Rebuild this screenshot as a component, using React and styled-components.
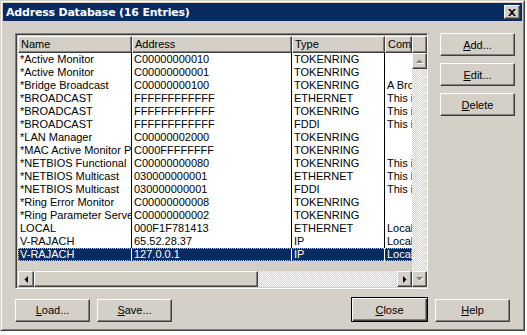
import styled, { createGlobalStyle, css } from "styled-components";

const GlobalStyle = createGlobalStyle`
    html, body {
        margin: 0;
        padding: 0;
        background: #ffffff;
    }
    body {
        font-family: "Liberation Sans", Arial, sans-serif;
        font-size: 11px;
        color: #000;
    }
`

const face = '#d4d0c8'

const raised = css`
    border: 1px solid;
    border-color: #fff #404040 #404040 #fff;
    box-shadow: inset -1px -1px 0 #808080, inset 1px 1px 0 ${face};
`

const Window = styled.div`
    width: 525px;
    height: 331px;
    box-sizing: border-box;
    background: ${face};
    border: 1px solid;
    border-color: ${face} #404040 #404040 ${face};
    box-shadow: inset 1px 1px 0 #fff, inset -1px -1px 0 #808080;
    padding: 2px;
    display: flex;
    flex-direction: column;
`

const TitleBar = styled.div`
    height: 18px;
    background: #0a2a62;
    color: #fff;
    display: flex;
    align-items: center;
    justify-content: space-between;
    padding: 0 2px 0 3px;
    font-family: "DejaVu Sans", Verdana, sans-serif;
    font-weight: bold;
    font-size: 11px;
    letter-spacing: -0.2px;
`

const CloseBox = styled.div`
    width: 14px;
    height: 12px;
    background: ${face};
    ${raised};
    display: flex;
    align-items: center;
    justify-content: center;
`

const Body = styled.div`
    padding: 12px 12px 0 12px;
    display: flex;
    flex-direction: column;
`

const MainRow = styled.div`
    display: flex;
    gap: 12px;
`

const List = styled.div`
    width: 413px;
    height: 256px;
    box-sizing: border-box;
    border: 1px solid;
    border-color: #808080 #fff #fff #808080;
    box-shadow: inset 1px 1px 0 #404040, inset -1px -1px 0 ${face};
    padding: 2px 1px 1px 2px;
    display: grid;
    grid-template-columns: 394px 15px;
    grid-template-rows: 17px 1fr 16px;
    background: ${face};
`

const Header = styled.div`
    grid-column: 1 / 3;
    display: flex;
`

const HeadCell = styled.div`
    width: ${p => p.w}px;
    flex: none;
    box-sizing: border-box;
    height: 17px;
    line-height: 15px;
    padding-left: 2px;
    background: ${face};
    ${raised};
    overflow: hidden;
    white-space: nowrap;
`

const Rows = styled.div`
    background: ${face};
    overflow: hidden;
`

const Row = styled.div`
    display: flex;
    height: 13px;
    line-height: 13px;
    background: ${p => p.selected ? '#0a2a62' : '#fff'};
    color: ${p => p.selected ? '#fff' : '#000'};
    outline: ${p => p.selected ? '1px dotted #c8c0a0' : 'none'};
    outline-offset: -1px;
`

const Cell = styled.div`
    width: ${p => p.w}px;
    flex: none;
    box-sizing: border-box;
    padding-left: 2px;
    border-right: ${p => p.last ? 'none' : '1px solid'};
    border-color: ${p => p.selected ? '#fff' : '#000'};
    overflow: hidden;
    white-space: nowrap;
`

const VScroll = styled.div`
    grid-row: 2 / 4;
    grid-column: 2;
    display: flex;
    flex-direction: column;
`

const HScroll = styled.div`
    display: flex;
`

const Track = styled.div`
    flex: 1;
    background: repeating-conic-gradient(#fff 0 25%, ${face} 0 50%) 0 0 / 2px 2px;
`

const ArrowBtn = styled.div`
    width: ${p => p.w || 15}px;
    height: ${p => p.h || 16}px;
    flex: none;
    box-sizing: border-box;
    background: ${face};
    ${raised};
    display: flex;
    align-items: center;
    justify-content: center;
`

const Thumb = styled.div`
    width: 224px;
    flex: none;
    box-sizing: border-box;
    background: ${face};
    ${raised};
`

const SideButtons = styled.div`
    display: flex;
    flex-direction: column;
    gap: 7px;
`

const Button = styled.div`
    width: ${p => p.isDefault ? 77 : 75}px;
    height: ${p => p.isDefault ? 25 : 23}px;
    box-sizing: border-box;
    background: ${face};
    ${raised};
    ${p => p.isDefault && css`
        border: 1px solid #000;
        box-shadow: inset 1px 1px 0 #fff, inset -1px -1px 0 #404040, inset -2px -2px 0 #808080;
    `}
    display: flex;
    align-items: center;
    justify-content: center;
    font-size: 11px;
    margin-top: ${p => p.isDefault ? -1 : 0}px;

    u { text-decoration: underline; text-underline-offset: 1px; }
`

const BottomRow = styled.div`
    display: flex;
    align-items: center;
    gap: 7px;
    margin-top: 9px;
`

const Spacer = styled.div`
    flex: 1;
`

const cols = [114, 160, 93, 27]

const rows = [
    ['*Active Monitor', 'C00000000010', 'TOKENRING', ''],
    ['*Active Monitor', 'C00000000001', 'TOKENRING', ''],
    ['*Bridge Broadcast', 'C00000000100', 'TOKENRING', 'A Broadcast'],
    ['*BROADCAST', 'FFFFFFFFFFFF', 'ETHERNET', 'This is'],
    ['*BROADCAST', 'FFFFFFFFFFFF', 'TOKENRING', 'This is'],
    ['*BROADCAST', 'FFFFFFFFFFFF', 'FDDI', 'This is'],
    ['*LAN Manager', 'C00000002000', 'TOKENRING', ''],
    ['*MAC Active Monitor Present', 'C000FFFFFFFF', 'TOKENRING', ''],
    ['*NETBIOS Functional', 'C00000000080', 'TOKENRING', 'This is'],
    ['*NETBIOS Multicast', '030000000001', 'ETHERNET', 'This is'],
    ['*NETBIOS Multicast', '030000000001', 'FDDI', 'This is'],
    ['*Ring Error Monitor', 'C00000000008', 'TOKENRING', ''],
    ['*Ring Parameter Server', 'C00000000002', 'TOKENRING', ''],
    ['LOCAL', '000F1F781413', 'ETHERNET', 'Local'],
    ['V-RAJACH', '65.52.28.37', 'IP', 'Local'],
    ['V-RAJACH', '127.0.0.1', 'IP', 'Local'],
]

// small triangle for scroll buttons
const Tri = ({ dir, disabled }) => {
    const pts = {
        up: '0,4 3.5,0.5 7,4',
        down: '0,0 3.5,3.5 7,0',
        left: '4,0 0.5,3.5 4,7',
        right: '0,0 3.5,3.5 0,7',
    }[dir]
    const vert = dir === 'up' || dir === 'down'
    return (
        <svg width={vert ? 7 : 4} height={vert ? 4 : 7} style={{ overflow: 'visible' }}>
            {disabled && <polygon points={pts} fill="#fff" transform="translate(1,1)" />}
            <polygon points={pts} fill={disabled ? '#808080' : '#000'} />
        </svg>
    )
}

const App = () => {
    return (
        <>
            <GlobalStyle />
            <Window>
                <TitleBar>
                    <span>Address Database (16 Entries)</span>
                    <CloseBox>
                        <svg width="8" height="7" viewBox="0 0 8 7">
                            <path d="M0 0 L2 0 L4 2 L6 0 L8 0 L5 3.5 L8 7 L6 7 L4 5 L2 7 L0 7 L3 3.5 Z" fill="#000" />
                        </svg>
                    </CloseBox>
                </TitleBar>

                <Body>
                    <MainRow>
                        <List>
                            <Header>
                                <HeadCell w={114}>Name</HeadCell>
                                <HeadCell w={160}>Address</HeadCell>
                                <HeadCell w={93}>Type</HeadCell>
                                <HeadCell w={27}>Comment</HeadCell>
                                <HeadCell w={15} />
                            </Header>

                            <Rows>
                                {rows.map((r, i) => {
                                    const sel = i === rows.length - 1
                                    return (
                                        <Row key={i} selected={sel}>
                                            {r.map((v, k) => (
                                                <Cell key={k} w={cols[k]} last={k === 3} selected={sel}>{v}</Cell>
                                            ))}
                                        </Row>
                                    )
                                })}
                            </Rows>

                            <VScroll>
                                <ArrowBtn><Tri dir="up" disabled /></ArrowBtn>
                                <Track />
                                <ArrowBtn><Tri dir="down" disabled /></ArrowBtn>
                            </VScroll>

                            <HScroll>
                                <ArrowBtn w={16}><Tri dir="left" /></ArrowBtn>
                                <Thumb />
                                <Track />
                                <ArrowBtn w={15}><Tri dir="right" /></ArrowBtn>
                            </HScroll>
                        </List>

                        <SideButtons>
                            <Button><span><u>A</u>dd...</span></Button>
                            <Button><span><u>E</u>dit...</span></Button>
                            <Button><span><u>D</u>elete</span></Button>
                        </SideButtons>
                    </MainRow>

                    <BottomRow>
                        <Button><span><u>L</u>oad...</span></Button>
                        <Button><span><u>S</u>ave...</span></Button>
                        <Spacer />
                        <Button isDefault><span><u>C</u>lose</span></Button>
                        <Button><span><u>H</u>elp</span></Button>
                    </BottomRow>
                </Body>
            </Window>
        </>
    )
}

export default App;
